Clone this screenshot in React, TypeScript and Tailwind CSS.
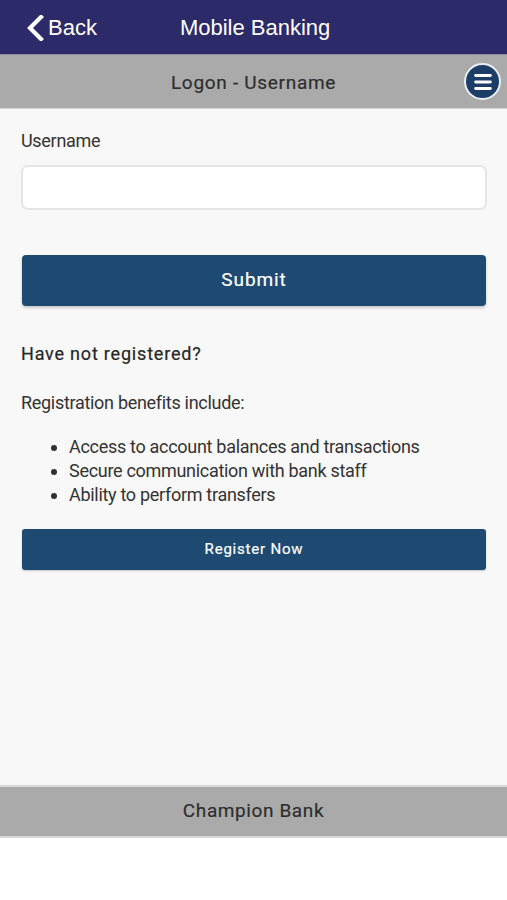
import { Menu } from 'lucide-react';

const BENEFITS = [
  'Access to account balances and transactions',
  'Secure communication with bank staff',
  'Ability to perform transfers',
];

export default function App() {
  return (
    <div className="w-[507px] h-[900px] flex flex-col bg-white font-['Roboto',sans-serif]">
      {/* top bar */}
      <div className="h-[55px] bg-[#2d2a69] border-b border-[#8d8ba8] flex items-center relative font-['Liberation_Sans',Arial,sans-serif] text-white">
        <div className="flex items-center pl-[26px] gap-[4px] pt-[2px]">
          <svg width="18" height="26" viewBox="0 0 18 26" fill="none">
            <path d="M15 2 L4 13 L15 24" stroke="white" strokeWidth="4.2" strokeLinecap="square" />
          </svg>
          <span className="text-[22px] leading-none">Back</span>
        </div>
        <span className="text-[22px] leading-none ml-[83px] pt-[2px]">Mobile Banking</span>
      </div>

      {/* sub bar */}
      <div className="h-[54px] bg-[#aaaaaa] border-b border-[#d4d4d4] flex items-center justify-center relative">
        <span className="text-[19px] tracking-[0.7px] text-[#2e2e2e] pt-[3px] [-webkit-text-stroke:0.2px_#2e2e2e]">Logon - Username</span>
        <button className="absolute right-[6px] top-[8px] w-[37px] h-[37px] rounded-full bg-[#1c3e66] border-2 border-[#e8eef4] flex items-center justify-center">
          <Menu size={22} strokeWidth={3.2} color="white" />
        </button>
      </div>

      {/* content */}
      <div className="flex-1 bg-[#f8f8f8] px-[21px] pt-[20px] text-[#333]">
        <label className="block text-[18px] leading-[24px] tracking-[-0.3px]">Username</label>
        <input
          type="text"
          className="block mt-[12px] w-[466px] h-[45px] bg-white border-2 border-[#e6e6e6] rounded-[7px] outline-none"
        />
        <button className="mt-[45px] ml-[1px] w-[464px] h-[51px] rounded-[4px] bg-[#1e4a72] text-white text-[19px] tracking-[0.9px] [-webkit-text-stroke:0.2px_white] shadow-[0_2px_3px_rgba(0,0,0,0.2)]">
          Submit
        </button>
        <h2 className="mt-[36px] text-[18px] tracking-[0.8px] leading-[24px] text-[#262626] [-webkit-text-stroke:0.2px_#262626]">Have not registered?</h2>
        <p className="mt-[25px] text-[18px] leading-[24px] tracking-[-0.3px]">Registration benefits include:</p>
        <ul className="mt-[20px] pl-[48px] list-disc text-[18px] leading-[24px] tracking-[-0.3px]">
          {BENEFITS.map((b) => (
            <li key={b}>{b}</li>
          ))}
        </ul>
        <button className="mt-[22px] ml-[1px] w-[464px] h-[41px] rounded-[3px] bg-[#1e4a72] text-white text-[15px] tracking-[0.8px] [-webkit-text-stroke:0.2px_white] shadow-[0_1px_2px_rgba(0,0,0,0.2)]">
          Register Now
        </button>
      </div>

      {/* footer */}
      <div className="h-[53px] bg-[#aaaaaa] border-t-2 border-b-2 border-t-[#d9d9d9] border-b-[#d9d9d9] flex items-center justify-center">
        <span className="text-[19px] tracking-[0.6px] text-[#2e2e2e] [-webkit-text-stroke:0.2px_#2e2e2e]">Champion Bank</span>
      </div>
      <div className="h-[62px] bg-white" />
    </div>
  );
}
